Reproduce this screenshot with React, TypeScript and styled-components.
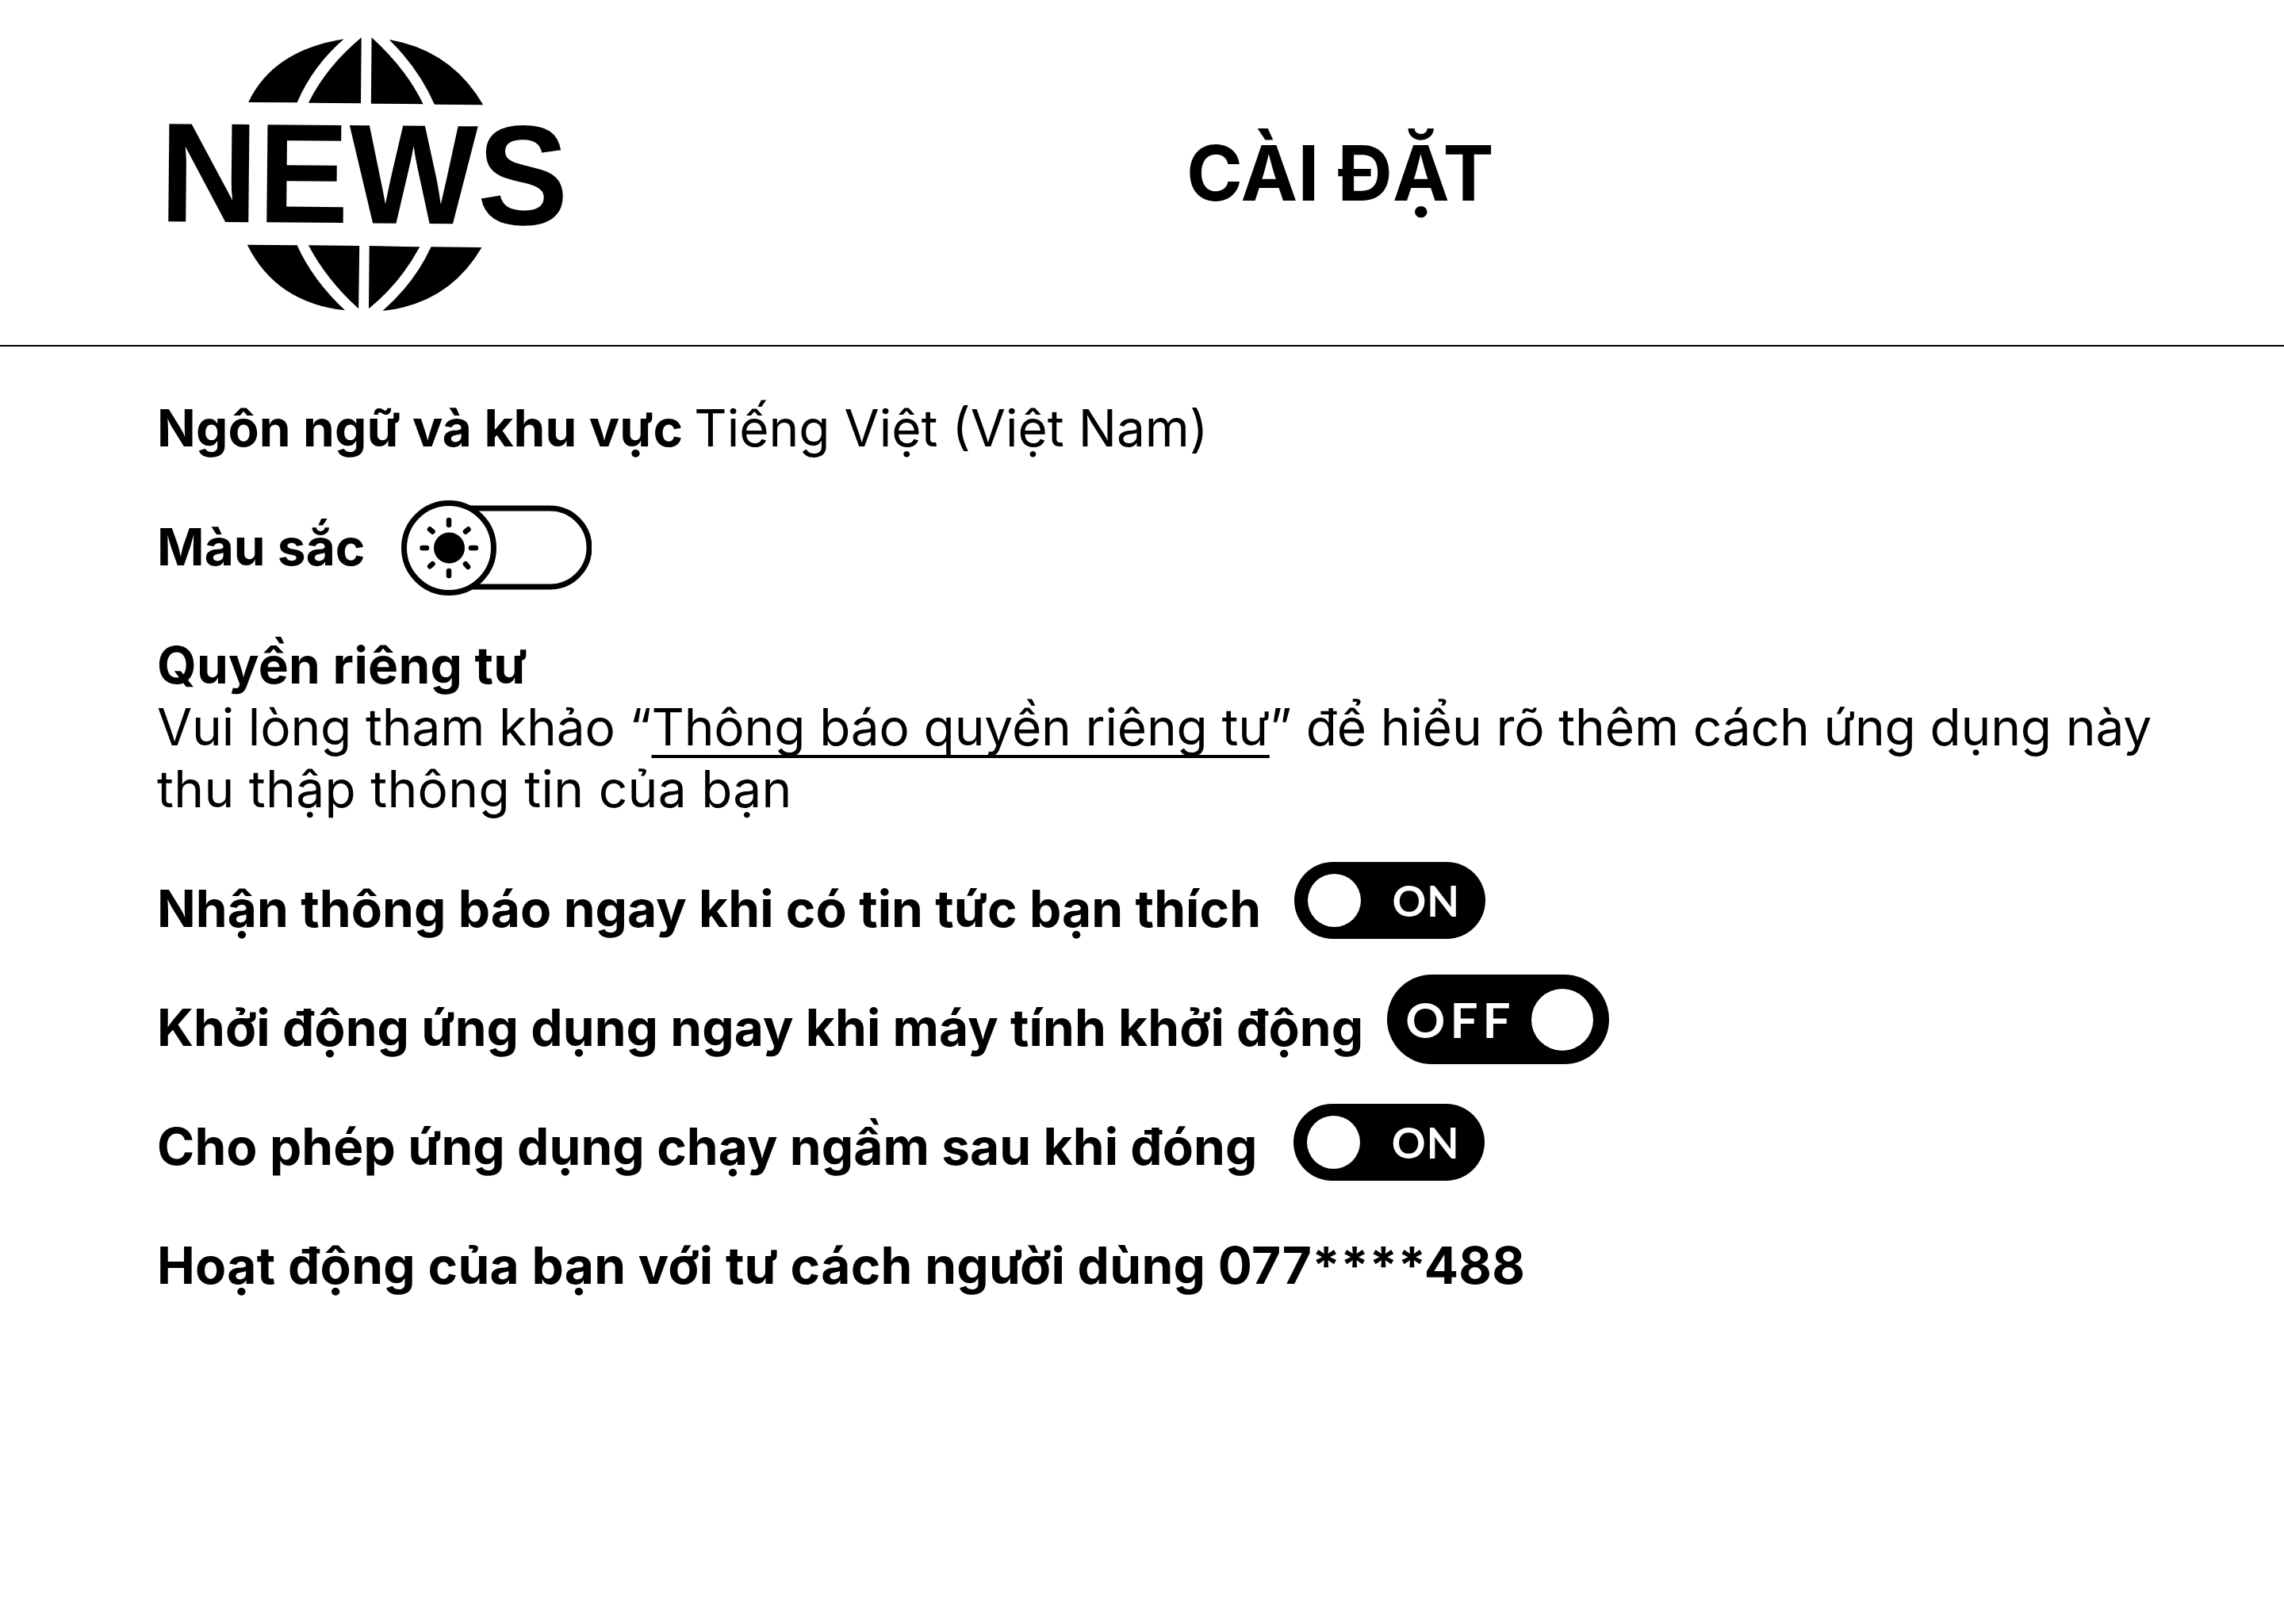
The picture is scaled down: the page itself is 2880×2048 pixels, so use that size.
import styled, { createGlobalStyle } from 'styled-components';

const GlobalStyle = createGlobalStyle`
  html, body {
    margin: 0;
    background: #fff;
    color: #000;
    font-family: 'Inter', 'Liberation Sans', sans-serif;
  }
`;

const Page = styled.div`
  width: 2880px;
  height: 2048px;
  overflow: hidden;
`;

const Header = styled.header`
  height: 437px;
  box-sizing: border-box;
  border-bottom: 2px solid #000;
  display: flex;
  align-items: center;
  padding-left: 180px;
`;

const Logo = styled.svg`
  width: 560px;
  height: 400px;
  flex: none;
  margin-top: 5px;
`;

const Title = styled.h1`
  margin: 0 0 0 756px;
  font-size: 96px;
  font-weight: 700;
  letter-spacing: 0.2px;
`;

const Content = styled.main`
  padding: 63px 100px 0 198px;
  display: flex;
  flex-direction: column;
  gap: 71px;
`;

const Row = styled.div<{ $gap?: number; $spacing?: number }>`
  display: flex;
  align-items: center;
  height: 79px;
  gap: ${(p) => p.$gap ?? 0}px;
  font-size: 64px;
  line-height: 79px;
  font-weight: 700;
  letter-spacing: ${(p) => p.$spacing ?? 0.08}px;
`;

const Paragraph = styled.div`
  font-size: 64px;
  line-height: 79px;
`;

const PrivacyBlock = styled.div`
  font-size: 64px;
  line-height: 78px;
  padding-bottom: 1px;
`;

const Strong = styled.strong<{ $spacing?: number }>`
  font-weight: 700;
  letter-spacing: ${(p) => p.$spacing ?? 0}px;
`;

const Region = styled.span`
  margin-left: -4px;
`;

const NoticeLine = styled.div<{ $spacing: number }>`
  letter-spacing: ${(p) => p.$spacing}px;
  white-space: nowrap;
`;

const Link = styled.span`
  text-decoration: underline;
  text-decoration-thickness: 4px;
  text-underline-offset: 12px;
  text-decoration-skip-ink: none;
`;

const SwitchIcon = styled.svg`
  flex: none;
  margin-top: 3px;
`;

const Pill = styled.div<{ $wide?: boolean; $lift: number }>`
  flex: none;
  width: ${(p) => (p.$wide ? 280 : 241)}px;
  height: ${(p) => (p.$wide ? 113 : 97)}px;
  margin-bottom: ${(p) => p.$lift}px;
  border-radius: 60px;
  background: #000;
  color: #fff;
  display: flex;
  align-items: center;
  justify-content: space-between;
  padding: 0 ${(p) => (p.$wide ? 20 : 32)}px 0 ${(p) => (p.$wide ? 23 : 17)}px;
  box-sizing: border-box;
  font-family: 'Lato', sans-serif;
  font-size: ${(p) => (p.$wide ? 62 : 53)}px;
  font-weight: 700;
  letter-spacing: ${(p) => (p.$wide ? 6 : 1)}px;
`;

const Knob = styled.span<{ $wide?: boolean }>`
  width: ${(p) => (p.$wide ? 78 : 67)}px;
  height: ${(p) => (p.$wide ? 78 : 67)}px;
  border-radius: 50%;
  background: #fff;
`;

const segments = [
  'M373 327L545 328Q600 190 710 88Q460 130 373 327Z',
  'M585 329L770 331L772 82Q650 190 585 329Z',
  'M806 332L990 334Q930 200 808 82Z',
  'M1030 335L1202 337Q1090 130 870 90Q975 200 1030 335Z',
  'M369 866L545 868Q600 1000 714 1114Q470 1085 369 866Z',
  'M585 868L765 870L762 1108Q650 1000 585 868Z',
  'M800 870L978 874Q910 1010 798 1108Z',
  'M1018 874L1197 876Q1080 1090 847 1116Q960 1010 1018 874Z',
];

const Toggle = ({ on, lift }: { on: boolean; lift: number }) =>
  on ? (
    <Pill $lift={lift}>
      <Knob />
      <span>ON</span>
    </Pill>
  ) : (
    <Pill $wide $lift={lift}>
      <span>OFF</span>
      <Knob $wide />
    </Pill>
  );

const rays = [
  [60, 25, 60, 31],
  [60, 89, 60, 95],
  [26.5, 60, 32, 60],
  [88, 60, 94, 60],
  [36, 36.5, 39.5, 39.5],
  [84.5, 36.5, 81, 39.5],
  [36.2, 83.2, 39.5, 80.2],
  [81, 80.2, 84.1, 83.8],
];

const ThemeSwitch = () => (
  <SwitchIcon width="240" height="120" viewBox="0 0 240 120">
    <path d="M60 10H187.5A49.5 49.5 0 0 1 187.5 109H60" fill="none" stroke="#000" strokeWidth="7" />
    <circle cx="60" cy="60" r="56.5" fill="#fff" stroke="#000" strokeWidth="7" />
    <circle cx="60.5" cy="60" r="19.5" fill="#000" />
    {rays.map(([x1, y1, x2, y2]) => (
      <line key={`${x1}-${y1}`} x1={x1} y1={y1} x2={x2} y2={y2} stroke="#000" strokeWidth="6.5" strokeLinecap="round" />
    ))}
  </SwitchIcon>
);

export default function App() {
  return (
    <Page>
      <GlobalStyle />
      <Header>
        <Logo viewBox="0 0 1568 1200" preserveAspectRatio="none">
          {segments.map((d) => (
            <path key={d} d={d} fill="#000" />
          ))}
          <text
            transform="translate(58 778) rotate(0.5) scale(0.896 1)"
            fontFamily="'Liberation Sans', sans-serif"
            fontWeight="700"
            fontSize="537"
          >
            NEWS
          </text>
        </Logo>
        <Title>CÀI ĐẶT</Title>
      </Header>
      <Content>
        <Paragraph>
          <Strong $spacing={0.1}>Ngôn ngữ và khu vực</Strong> <Region>Tiếng Việt (Việt Nam)</Region>
        </Paragraph>
        <Row $gap={46} $spacing={0}>
          Màu sắc
          <ThemeSwitch />
        </Row>
        <PrivacyBlock>
          <Strong $spacing={0.26}>Quyền riêng tư</Strong>
          <NoticeLine $spacing={-0.16}>
            Vui lòng tham khảo “<Link>Thông báo quyền riêng tư</Link>” để hiểu rõ thêm cách ứng dụng này
          </NoticeLine>
          <NoticeLine $spacing={0.3}>thu thập thông tin của bạn</NoticeLine>
        </PrivacyBlock>
        <Row $gap={42}>
          Nhận thông báo ngay khi có tin tức bạn thích
          <Toggle on lift={20} />
        </Row>
        <Row $gap={30}>
          Khởi động ứng dụng ngay khi máy tính khởi động
          <Toggle on={false} lift={20} />
        </Row>
        <Row $gap={46}>
          Cho phép ứng dụng chạy ngầm sau khi đóng
          <Toggle on lift={11} />
        </Row>
        <Row $spacing={0.3}>Hoạt động của bạn với tư cách người dùng 077****488</Row>
      </Content>
    </Page>
  );
}
